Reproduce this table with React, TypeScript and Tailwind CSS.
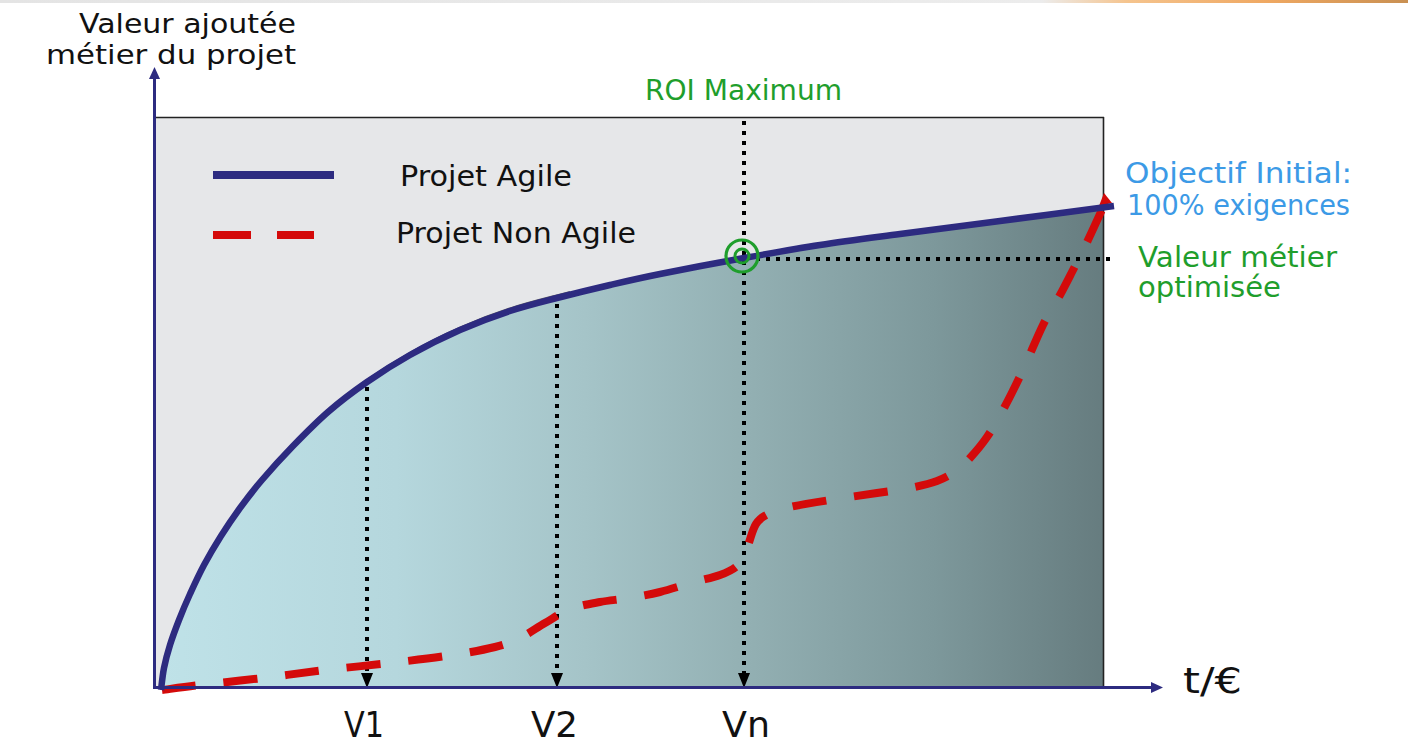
type Pt = [number, number]

// Catmull-Rom through the points -> cubic bezier path
function smooth(pts: Pt[]): string {
  let d = `M${pts[0][0]} ${pts[0][1]}`
  for (let i = 0; i < pts.length - 1; i++) {
    const p0 = pts[i - 1] || pts[i]
    const p1 = pts[i]
    const p2 = pts[i + 1]
    const p3 = pts[i + 2] || p2
    const c1x = p1[0] + (p2[0] - p0[0]) / 6
    const c1y = p1[1] + (p2[1] - p0[1]) / 6
    const c2x = p2[0] - (p3[0] - p1[0]) / 6
    const c2y = p2[1] - (p3[1] - p1[1]) / 6
    d += ` C${c1x.toFixed(1)} ${c1y.toFixed(1)} ${c2x.toFixed(1)} ${c2y.toFixed(1)} ${p2[0]} ${p2[1]}`
  }
  return d
}

const NAVY = '#2d2b80'
const RED = '#d40a0a'
const GREEN = '#1f9e2c'
const BLUE = '#3c9ae6'
const FONT = '"DejaVu Sans", Verdana, sans-serif'

const agile: Pt[] = [
  [161, 690], [164, 668], [170, 645], [179, 620], [190, 594], [204, 565], [221, 536],
  [240, 508], [262, 480], [293, 446], [328, 412], [367, 382], [410, 355], [460, 330],
  [510, 311], [557, 298], [610, 285], [660, 274], [744, 258], [820, 245], [900, 234],
  [1000, 221], [1114, 206],
]

const nonAgile: Pt[] = [
  [162, 690], [200, 685], [263, 678], [325, 670], [390, 663], [453, 655], [495, 647],
  [520, 638], [545, 623], [570, 609], [600, 602], [629, 598], [660, 592], [694, 582],
  [720, 575], [738, 565], [747, 548], [756, 524], [770, 513], [790, 507], [830, 500],
  [877, 493], [910, 488], [937, 481], [956, 471], [970, 458], [987, 437], [1003, 410],
  [1022, 372], [1043, 325], [1060, 295], [1072, 272], [1088, 240], [1105, 203],
]

const agileD = smooth(agile)
const fillD = `${agileD} L1114 688 L160 688 Z`

type Label = { text: string; x: number; y: number; w: number; size: number; color: string }

const labels: Label[] = [
  { text: 'Valeur ajoutée', x: 79, y: 33, w: 217, size: 27, color: '#111' },
  { text: 'métier du projet', x: 46, y: 64, w: 250, size: 27, color: '#111' },
  { text: 'ROI Maximum', x: 645, y: 100, w: 197, size: 29, color: GREEN },
  { text: 'Projet Agile', x: 400, y: 186, w: 172, size: 28, color: '#111' },
  { text: 'Projet Non Agile', x: 396, y: 243, w: 240, size: 28, color: '#111' },
  { text: 'Objectif Initial:', x: 1125, y: 183, w: 227, size: 28, color: BLUE },
  { text: '100% exigences', x: 1127, y: 215, w: 223, size: 28, color: BLUE },
  { text: 'Valeur métier', x: 1138, y: 267, w: 199, size: 28, color: GREEN },
  { text: 'optimisée', x: 1138, y: 297, w: 143, size: 28, color: GREEN },
  { text: 't/€', x: 1183, y: 693, w: 59, size: 35, color: '#111' },
  { text: 'V1', x: 344, y: 737, w: 40, size: 35, color: '#111' },
  { text: 'V2', x: 531, y: 737, w: 47, size: 35, color: '#111' },
  { text: 'Vn', x: 722, y: 737, w: 48, size: 35, color: '#111' },
]

function DropLine({ x, top }: { x: number; top: number }) {
  return (
    <g>
      <line x1={x} y1={top} x2={x} y2={676} stroke="#000" strokeWidth={4} strokeDasharray="4 6" />
      <polygon points={`${x - 6},${673} ${x + 6},${673} ${x},${688}`} fill="#000" />
    </g>
  )
}

export default function App() {
  return (
    <div className="w-[1408px] h-[746px] bg-white flex flex-col overflow-hidden">
      <div className="h-[3px] w-full bg-[linear-gradient(to_right,#e4e4e4_0%,#ececec_74%,#f5c48e_80%,#efa862_90%,#c99052_100%)]" />
      <svg width={1408} height={743} viewBox="0 3 1408 743" className="block">
        <defs>
          <linearGradient id="valueFill" x1="160" y1="0" x2="1104" y2="0" gradientUnits="userSpaceOnUse">
            <stop offset="0" stopColor="#bfe2e8" />
            <stop offset="0.25" stopColor="#b5d7dd" />
            <stop offset="0.45" stopColor="#a5c4c8" />
            <stop offset="0.62" stopColor="#93b0b3" />
            <stop offset="0.82" stopColor="#7d989b" />
            <stop offset="1" stopColor="#667c7f" />
          </linearGradient>
          <clipPath id="box">
            <rect x={155} y={117} width={948} height={571} />
          </clipPath>
          <clipPath id="rim">
            <rect x={270} y={250} width={300} height={200} />
          </clipPath>
        </defs>

        {/* plot area */}
        <rect x={155} y={117} width={948} height={571} fill="#e6e7e9" />
        <path d={fillD} fill="url(#valueFill)" clipPath="url(#box)" />
        <line x1={155} y1={117.5} x2={1104} y2={117.5} stroke="#222" strokeWidth={1.6} />
        <line x1={1103.5} y1={117} x2={1103.5} y2={688} stroke="#222" strokeWidth={1.6} />

        {/* legend */}
        <line x1={213} y1={175} x2={334} y2={175} stroke={NAVY} strokeWidth={8} />
        <rect x={213} y={231} width={38} height={8} fill={RED} />
        <rect x={277} y={231} width={37} height={8} fill={RED} />

        {/* guide lines */}
        <DropLine x={367} top={387} />
        <DropLine x={557} top={304} />
        <DropLine x={744} top={121} />
        <line x1={756} y1={259} x2={1110} y2={259} stroke="#000" strokeWidth={4} strokeDasharray="4 6" />

        {/* non agile */}
        <path d={smooth(nonAgile)} fill="none" stroke={RED} strokeWidth={8} strokeDasharray="34 28" />
        <polygon points="1099,206 1104,193 1112,203" fill={RED} />

        {/* agile */}
        <g clipPath="url(#rim)">
          <path d={agileD} transform="translate(1.5 -3.5)" fill="none" stroke="#1a1a2a" strokeWidth={1.2} opacity={0.7} />
        </g>
        <path d={agileD} fill="none" stroke={NAVY} strokeWidth={6.5} strokeLinecap="butt" />

        {/* axes */}
        <line x1={154.5} y1={78} x2={154.5} y2={689} stroke={NAVY} strokeWidth={3} />
        <polygon points="149,79 160,79 154.5,67" fill={NAVY} />
        <line x1={154} y1={687.5} x2={1152} y2={687.5} stroke={NAVY} strokeWidth={3} />
        <polygon points="1151,682 1151,693 1163,687.5" fill={NAVY} />

        {/* ROI target */}
        <circle cx={742} cy={256} r={16} fill="none" stroke={GREEN} strokeWidth={3.2} />
        <circle cx={742} cy={256} r={7} fill="none" stroke={GREEN} strokeWidth={3} />

        {labels.map((l) => (
          <text
            key={l.text}
            x={l.x}
            y={l.y}
            fill={l.color}
            fontSize={l.size}
            fontFamily={FONT}
            textLength={l.w}
            lengthAdjust="spacingAndGlyphs"
          >
            {l.text}
          </text>
        ))}
      </svg>
    </div>
  )
}
